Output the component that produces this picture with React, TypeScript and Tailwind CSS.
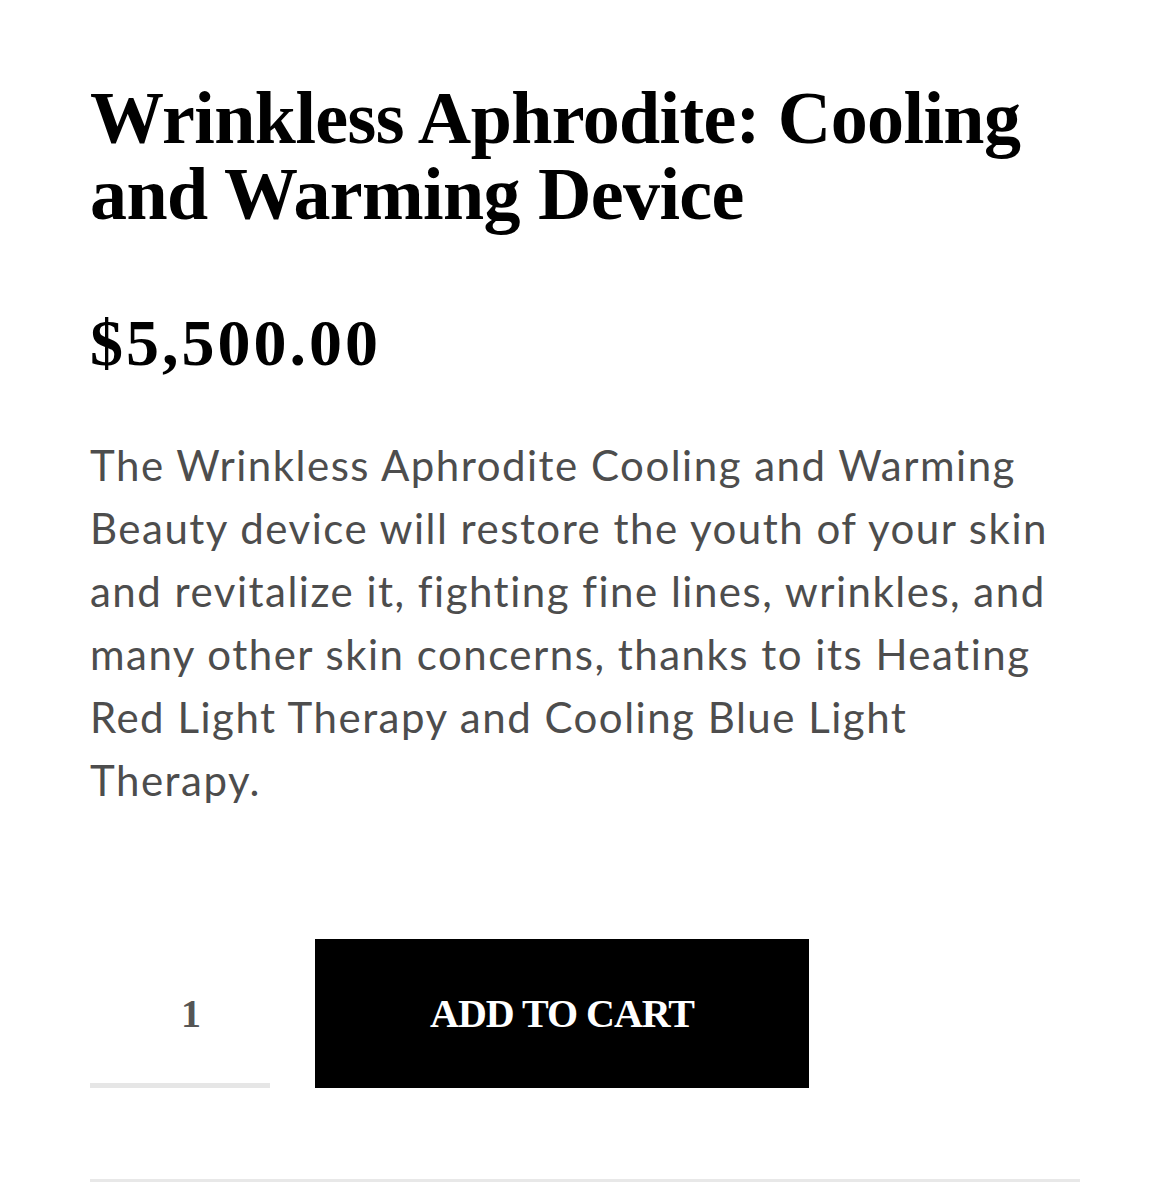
import React from "react";

const serif = { fontFamily: '"Liberation Serif", "DejaVu Serif", serif' };
const sans = { fontFamily: 'Lato, "Open Sans", "Liberation Sans", sans-serif' };

export default function App() {
  return (
    <div className="min-h-[1189px] w-[1170px] bg-white">
      <div className="px-[90px] pt-[80px]">
        <h1
          className="text-[74px] font-bold leading-[76px] tracking-[-0.6px] text-black"
          style={serif}
        >
          Wrinkless Aphrodite: Cooling
          <br />
          and Warming Device
        </h1>
        <div
          className="mt-[78px] text-[66px] font-bold leading-none tracking-[3px] text-black"
          style={serif}
        >
          $5,500.00
        </div>
        <p
          className="mt-[58px] text-[42px] leading-[63px] tracking-[1.5px] text-[#4d4d4d]"
          style={sans}
        >
          The Wrinkless Aphrodite Cooling and Warming
          <br />
          Beauty device will restore the youth of your skin
          <br />
          and revitalize it, fighting fine lines, wrinkles, and
          <br />
          many other skin concerns, thanks to its Heating
          <br />
          Red Light Therapy and Cooling Blue Light
          <br />
          Therapy.
        </p>
        <div className="mt-[127px] flex items-stretch gap-[45px]">
          <div className="flex h-[149px] w-[180px] items-center justify-center border-b-[5px] border-[#e6e6e6]">
            <span className="pl-[22px] pt-[5px] text-[40px] font-bold text-[#555]" style={serif}>
              1
            </span>
          </div>
          <button
            className="flex h-[149px] w-[494px] items-center justify-center bg-black text-[40px] font-bold uppercase tracking-[-1px] text-white"
            style={serif}
          >
            Add to cart
          </button>
        </div>
        <div className="mt-[91px] h-[3px] w-[990px] bg-[#e8e8e8]" />
      </div>
    </div>
  );
}
